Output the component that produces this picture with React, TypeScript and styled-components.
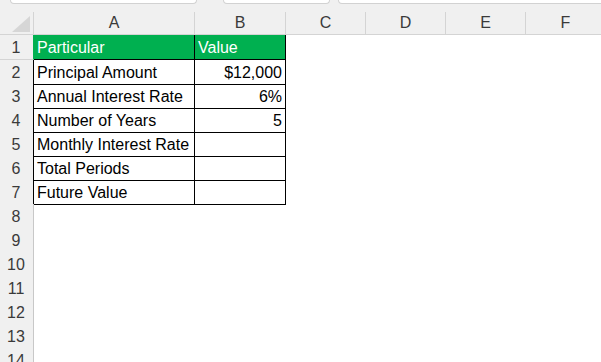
import React from "react";
import styled, { createGlobalStyle } from "styled-components";

const GlobalStyle = createGlobalStyle`
  html, body { margin: 0; padding: 0; background: #ffffff; }
  body { font-family: "Liberation Sans", Arial, sans-serif; }
`;

const COLS = "34px 161px 91px 80px 80px 80px 80px";
const GRID_LINE = "#d4d4d4";
const HEADER_BG = "#f0f0f0";

const Sheet = styled.div`
  width: 601px;
  height: 362px;
  overflow: hidden;
  background: #ffffff;
  font-family: "Liberation Sans", Arial, sans-serif;
  font-size: 16px;
`;

const TopStrip = styled.div`
  display: flex;
  height: 12px;
  background: ${HEADER_BG};
  gap: 26px;
  padding-left: 10px;
`;

const TabBox = styled.div<{ $w?: number; $grow?: boolean }>`
  box-sizing: border-box;
  height: 4px;
  width: ${(p) => (p.$w ? `${p.$w}px` : "auto")};
  flex: ${(p) => (p.$grow ? "1 0 auto" : "0 0 auto")};
  margin-right: ${(p) => (p.$grow ? "-10px" : "0")};
  background: #ffffff;
  border: 1px solid #d2d2d2;
  border-top: none;
  border-radius: 0 0 6px 6px;
`;

const TabGroup = styled.div`
  display: flex;
  flex: 1;
  gap: 8px;
`;

const HeaderRow = styled.div`
  display: grid;
  grid-template-columns: ${COLS};
  height: 23px;
  box-sizing: border-box;
  background: ${HEADER_BG};
  border-bottom: 1px solid ${GRID_LINE};
`;

const Corner = styled.div`
  box-sizing: border-box;
  border-right: 1px solid ${GRID_LINE};
  display: flex;
  align-items: flex-end;
  justify-content: flex-end;
  padding: 0 2px 2px 0;
`;

const ColHeader = styled.div`
  box-sizing: border-box;
  border-right: 1px solid ${GRID_LINE};
  color: #3a3a3a;
  text-align: center;
  line-height: 22px;
  font-size: 16px;
`;

const Row = styled.div<{ $h: number }>`
  display: grid;
  grid-template-columns: ${COLS};
  height: ${(p) => p.$h}px;
`;

const RowHeader = styled.div<{ $edge: string }>`
  box-sizing: border-box;
  background: ${HEADER_BG};
  border-right: 1px solid ${(p) => p.$edge};
  border-bottom: 1px solid ${GRID_LINE};
  color: #3a3a3a;
  text-align: center;
  padding-top: 1px;
  padding-right: 1px;
  line-height: 23px;
  font-size: 16px;
`;

const Cell = styled.div<{ $boxed?: boolean; $fill?: string; $right?: boolean; $light?: boolean }>`
  box-sizing: border-box;
  background: ${(p) => p.$fill || "transparent"};
  border-right: 1px solid ${(p) => (p.$boxed ? "#000000" : "transparent")};
  border-bottom: 1px solid ${(p) => (p.$boxed ? "#000000" : "transparent")};
  color: ${(p) => (p.$light ? "#ffffff" : "#000000")};
  text-align: ${(p) => (p.$right ? "right" : "left")};
  padding: 1px 3px 0 3px;
  line-height: 23px;
  white-space: nowrap;
  overflow: hidden;
`;

const SelectAll = () => (
  <svg width="19" height="16" viewBox="0 0 19 16">
    <polygon points="18,0 18,16 0,16" fill="#d6d6d6" />
  </svg>
);

const rows: { label: string; value: string }[] = [
  { label: "Particular", value: "Value" },
  { label: "Principal Amount", value: "$12,000" },
  { label: "Annual Interest Rate", value: "6%" },
  { label: "Number of Years", value: "5" },
  { label: "Monthly Interest Rate", value: "" },
  { label: "Total Periods", value: "" },
  { label: "Future Value", value: "" },
];

const GREEN = "#00b050";

export default function App() {
  const all = Array.from({ length: 14 }, (_, i) => i + 1);
  return (
    <>
      <GlobalStyle />
      <Sheet>
        <TopStrip>
          <TabBox $w={187} />
          <TabGroup>
            <TabBox $w={107} />
            <TabBox $grow />
          </TabGroup>
        </TopStrip>
        <HeaderRow>
          <Corner>
            <SelectAll />
          </Corner>
          {["A", "B", "C", "D", "E", "F"].map((c) => (
            <ColHeader key={c}>{c}</ColHeader>
          ))}
        </HeaderRow>
        {all.map((n) => {
          const data = rows[n - 1];
          const isHead = n === 1;
          const inTable = !!data;
          return (
            <Row key={n} $h={n === 1 ? 25 : 24}>
              <RowHeader $edge={isHead ? GREEN : inTable ? "#000000" : "#c8c8c8"}>{n}</RowHeader>
              <Cell $boxed={inTable} $fill={isHead ? GREEN : undefined} $light={isHead}>
                {data ? data.label : ""}
              </Cell>
              <Cell
                $boxed={inTable}
                $fill={isHead ? GREEN : undefined}
                $light={isHead}
                $right={!isHead}
              >
                {data ? data.value : ""}
              </Cell>
            </Row>
          );
        })}
      </Sheet>
    </>
  );
}
